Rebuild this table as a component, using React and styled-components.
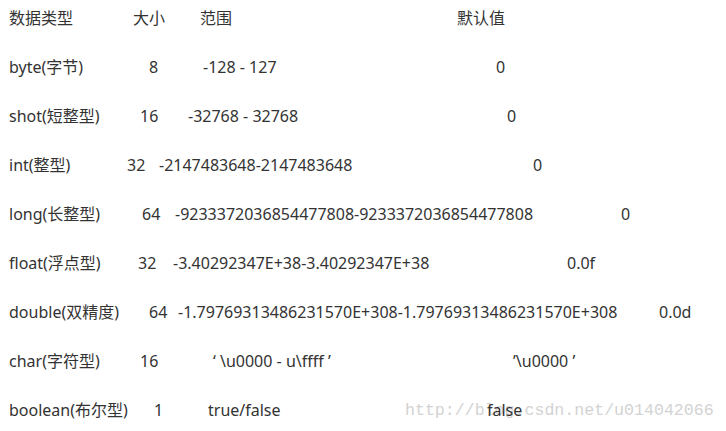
import React from "react";
import styled, { createGlobalStyle } from "styled-components";

const Global = createGlobalStyle`
  html, body { margin: 0; padding: 0; background: #fff; }
  body { font-family: "Noto Sans", "Noto Sans CJK SC", sans-serif; }
`;

const Page = styled.div`
  position: relative;
  width: 726px;
  height: 431px;
  overflow: hidden;
  box-sizing: border-box;
  padding: 7px 0 0 9px;
`;

const Table = styled.div`
  position: relative;
  z-index: 1;
  display: flex;
  flex-direction: column;
  gap: 27px;
`;

const Row = styled.div`
  display: flex;
  align-items: baseline;
  height: 22px;
  line-height: 22px;
  font-size: 16px;
  color: #333;
  white-space: pre;
`;

const Cell = styled.span`
  flex: 0 0 ${(p) => (p.$w ? `${p.$w}px` : "auto")};
  font-family: "Noto Sans", "Noto Sans CJK SC", sans-serif;
`;

const Watermark = styled.div`
  position: absolute;
  z-index: 0;
  left: 405px;
  top: 400px;
  line-height: 22px;
  font-family: "Liberation Mono", "DejaVu Sans Mono", monospace;
  font-size: 16.6px;
  color: #d3d3d3;
  white-space: pre;
`;

const rows = [
  { cells: ["数据类型", "大小", "范围", "默认值"], w: [124, 67, 257] },
  { cells: ["byte(字节)", "8", "-128 - 127", "0"], w: [140, 54, 293] },
  { cells: ["shot(短整型)", "16", "-32768 - 32768", "0"], w: [131, 48, 319] },
  { cells: ["int(整型)", "32", "-2147483648-2147483648", "0"], w: [118, 32, 374] },
  {
    cells: ["long(长整型)", "64", "-9233372036854477808-9233372036854477808", "0"],
    w: [133, 33, 446],
  },
  {
    cells: ["float(浮点型)", "32", "-3.40292347E+38-3.40292347E+38", "0.0f"],
    w: [129, 35, 394],
  },
  {
    cells: [
      "double(双精度)",
      "64",
      "-1.79769313486231570E+308-1.79769313486231570E+308",
      "0.0d",
    ],
    w: [140, 29, 481],
  },
  {
    cells: ["char(字符型)", "16", "‘ \\u0000 - u\\ffff ’", "’\\u0000 ’"],
    w: [131, 73, 300],
  },
  { cells: ["boolean(布尔型)", "1", "true/false", "false"], w: [145, 54, 279] },
];

export default function App() {
  return (
    <>
      <Global />
      <Page>
        <Watermark>http://blog.csdn.net/u014042066</Watermark>
        <Table>
          {rows.map((r, i) => (
            <Row key={i}>
              {r.cells.map((c, j) => (
                <Cell key={j} $w={r.w[j]}>
                  {c}
                </Cell>
              ))}
            </Row>
          ))}
        </Table>
      </Page>
    </>
  );
}
